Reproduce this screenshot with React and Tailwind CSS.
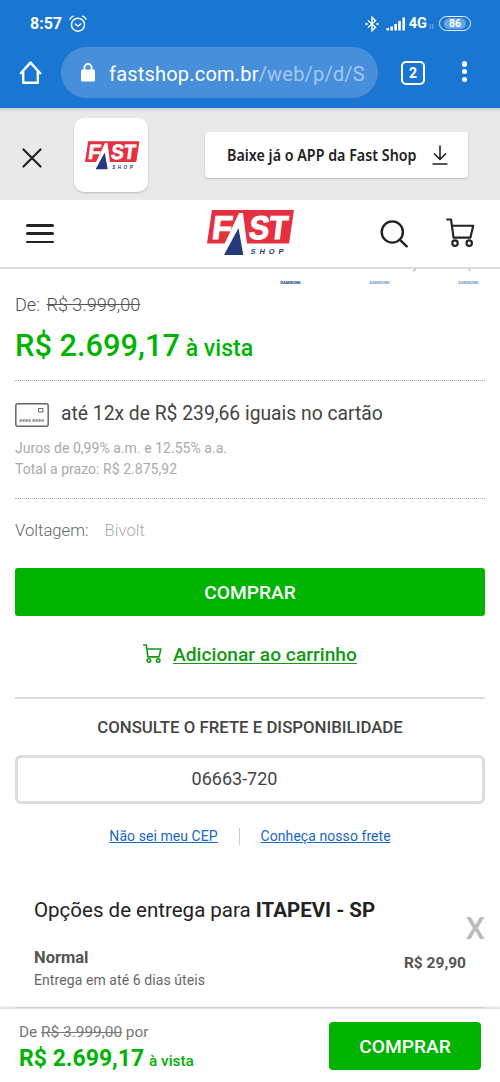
const thumbs = [
  { id: 1, className: 'text-[#1b4f9c]' },
  { id: 2, className: 'text-[#7f9fd6]' },
  { id: 3, className: 'text-[#7f9fd6]' },
];

// Red flag with the blue "A" spike, shared by the app banner and the site header.
function FastLogo({ className }) {
  return (
    <svg viewBox="0 0 88 46" className={className} role="img" aria-label="Fast Shop">
      <path d="M5 0H87L82 33.5H0Z" fill="#e5303f" />
      <path d="M32 3H36L41.5 45.5H12Z" fill="#fff" />
      <path d="M31.5 18L36.3 45H17Z" fill="#243a7c" />
      <g fontFamily="Liberation Sans" fontWeight="700" fill="#fff" stroke="#fff" strokeWidth="1.1" transform="translate(0 28.5) skewX(-7)">
        <text x="4" y="0" fontSize="33" textLength="20" lengthAdjust="spacingAndGlyphs">F</text>
        <text x="41" y="0" fontSize="33" textLength="38.5" lengthAdjust="spacingAndGlyphs">ST</text>
      </g>
      <text x="43.5" y="44" fontFamily="Liberation Sans" fontWeight="700" fontStyle="italic" fontSize="7.5" textLength="33" fill="#243a7c">SHOP</text>
    </svg>
  );
}

function CartIcon({ className, strokeWidth }) {
  return (
    <svg viewBox="0 0 30 30" className={className} fill="none" stroke="currentColor" strokeWidth={strokeWidth} strokeLinecap="round" strokeLinejoin="round">
      <path d="M1.2 1.5H5.2L7.8 20.3H25.2L28.2 8H6.2" />
      <circle cx="9.3" cy="26" r="2.8" />
      <circle cx="24" cy="26" r="2.8" />
    </svg>
  );
}

function StatusBar() {
  return (
    <div className="flex h-[46px] items-center pl-[30px] pr-[29px] pt-px">
      <span className="text-[16px] font-bold leading-4">8:57</span>
      <svg viewBox="0 0 18 18" className="ml-[7px] size-[18px]" fill="none" stroke="currentColor" strokeWidth="1.4" strokeLinecap="round">
        <circle cx="9" cy="9.7" r="6.5" />
        <path d="M1 4.2Q2 2 4.4 1.2M17 4.2Q16 2 13.6 1.2M6.3 9L9 11.2L11.8 9" />
      </svg>
      <svg viewBox="0 0 14 16" className="ml-auto h-4 w-[14px]" fill="none" stroke="currentColor" strokeWidth="1.4">
        <path d="M3 4.5L10.5 11.2L7 14.8V1.2L10.5 4.8L3 11.5" />
        <path d="M0.5 8H2.5M11.5 8H13.5" strokeWidth="1.8" />
      </svg>
      <svg viewBox="0 0 20 14" className="ml-[7px] h-[14px] w-5" fill="currentColor">
        <path d="M0.5 11h2.6v2.5H0.5zM4.4 9.5h2.6v4H4.4zM8.3 7h2.6v6.5H8.3zM12.2 4h2.6v9.5h-2.6zM16.4 0.5h2.6v13h-2.6z" />
      </svg>
      <span className="ml-[3px] text-[14.5px] font-bold leading-4">4G</span>
      <svg viewBox="0 0 6 6" className="ml-[2px] mt-[5px] size-[5px] opacity-50" stroke="currentColor" strokeWidth="1">
        <path d="M1.5 0V6M4.5 0V6" />
      </svg>
      <div className="ml-[5px] flex h-[15px] w-8 items-center justify-center rounded-full border-[1.5px] border-white/90 p-[1px]">
        <span className="flex h-full w-[22px] items-center justify-center rounded-full bg-white/35 pt-px text-[10.5px] font-bold leading-none">86</span>
      </div>
    </div>
  );
}

function AddressBar() {
  return (
    <div className="flex h-[62px] items-start pt-[1px]">
      <svg viewBox="0 0 24 24" className="ml-[19px] mt-[14px] size-6" fill="none" stroke="currentColor" strokeWidth="2.4" strokeLinejoin="round" strokeLinecap="round">
        <path d="M1.8 12.2L11.5 1.6L21.2 12.2M4.2 10.5V21.8H18.8V10.5" />
      </svg>
      <div className="ml-[18px] flex h-[51px] w-[317px] items-center rounded-full bg-[#488fdb] pl-5">
        <svg viewBox="0 0 14 19" className="h-[19px] w-[14px]" aria-hidden="true">
          <rect y="6.5" width="14" height="12" rx="1.5" fill="currentColor" />
          <path d="M3.4 7V4.6a3.6 3.6 0 0 1 7.2 0V7" fill="none" stroke="currentColor" strokeWidth="1.8" />
        </svg>
        <span className="ml-[14px] pt-[2px] text-[20px] tracking-[0.2px] whitespace-nowrap">
          fastshop.com.br<span className="text-[#a3c9f1]">/web/p/d/S</span>
        </span>
      </div>
      <div className="ml-[23px] mt-[14px] flex h-6 w-[24px] items-center justify-center rounded-[5px] border-[2.5px] border-white text-[14px] font-bold">2</div>
      <div className="ml-[36.5px] mt-[14px] flex flex-col gap-[2.2px]">
        <i className="size-[5.6px] rounded-full bg-white" />
        <i className="size-[5.6px] rounded-full bg-white" />
        <i className="size-[5.6px] rounded-full bg-white" />
      </div>
    </div>
  );
}

function AppBanner() {
  return (
    <div className="flex h-[92px] items-start bg-[#e9e9e9] bg-linear-to-b from-[#cdd1d9] to-[#e9e9e9] to-[5px]">
      <svg viewBox="0 0 20 20" className="ml-[22px] mt-10 size-5" fill="none" stroke="#222" strokeWidth="2.2" strokeLinecap="round">
        <path d="M1.5 1.5L18.5 18.5M18.5 1.5L1.5 18.5" />
      </svg>
      <div className="ml-8 mt-[10px] flex h-[74px] w-[74px] items-center justify-center rounded-[10px] bg-white pl-[2px] shadow-[0_1px_2px_#bbb]">
        <FastLogo className="h-[29px] w-[55px]" />
      </div>
      <button className="ml-[57px] mt-6 flex h-[46px] w-[263px] items-center rounded-[3px] bg-white pl-[22px] text-[#222] shadow-[0_1px_2px_#bbb]">
        <span className="w-[190px] whitespace-nowrap text-left">
          <span className="inline-block origin-left scale-x-[0.893] font-['Noto_Sans'] text-[16px] font-semibold">Baixe já o APP da Fast Shop</span>
        </span>
        <svg viewBox="0 0 16 20" className="ml-[15px] h-5 w-4 shrink-0" fill="none" stroke="#222" strokeWidth="1.6">
          <path d="M8 0.5V14M2 8.5L8 14.3L14 8.5M0.5 19H15.5" />
        </svg>
      </button>
    </div>
  );
}

function SiteHeader() {
  return (
    <header className="flex h-[69px] items-start border-b-2 border-[#dcdcdc] bg-white text-[#222]">
      <div className="ml-[26px] mt-6 flex w-7 flex-col gap-[5.5px]">
        <i className="h-[2.8px] rounded-full bg-[#222]" />
        <i className="h-[2.8px] rounded-full bg-[#222]" />
        <i className="h-[2.8px] rounded-full bg-[#222]" />
      </div>
      <FastLogo className="ml-[153px] mt-[10px] h-[46px] w-[88px]" />
      <svg viewBox="0 0 28 28" className="ml-[85px] mt-5 size-7" fill="none" stroke="currentColor" strokeWidth="2.4" strokeLinecap="round">
        <circle cx="12.3" cy="12" r="10.6" />
        <path d="M20 19.8L26.7 26.3" />
      </svg>
      <CartIcon className="ml-[38px] mt-[18px] size-[29px]" strokeWidth={2.2} />
    </header>
  );
}

function App() {
  return (
    <div className="h-[1082px] w-[500px] overflow-hidden bg-white font-[Roboto,sans-serif] text-[#444]">
      <div className="h-[108px] bg-[#1976d2] text-white">
        <StatusBar />
        <AddressBar />
      </div>
      <AppBanner />
      <SiteHeader />

      <main className="px-[15px]">
        <div className="relative flex h-[22px] items-center justify-end gap-[66px] pt-[6px] pr-[5px]">
          <svg viewBox="0 0 60 3" className="absolute left-[397px] top-0 h-[3px] w-[60px]" fill="none" stroke="#999">
            <path d="M1 2L4 0M57 0L58.5 2" />
          </svg>
          {thumbs.map((thumb) => (
            <span key={thumb.id} className={`w-[23px] text-center text-[4.2px] font-black leading-none ${thumb.className}`}>SAMSUNG</span>
          ))}
        </div>

        <p className="h-[28px] text-[18.1px] font-light leading-[28px] text-[#555]">
          De: <s className="ml-[2px]">R$ 3.999,00</s>
        </p>
        <p className="h-[61px] whitespace-nowrap pt-[6px] text-[30.8px] font-medium leading-[42px] text-[#00b300]">
          R$ 2.699,17 <span className="-ml-[2px] text-[23.1px]">à vista</span>
        </p>

        <div className="h-[119px] border-y border-dotted border-[#aaa]">
          <div className="flex h-[67px] items-center">
            <svg viewBox="0 0 34 24" className="h-6 w-[34px]" fill="none" stroke="#666">
              <rect x="0.8" y="0.8" width="32.4" height="22.4" rx="2" strokeWidth="1.5" />
              <path d="M23.5 5.5h4.5v3.5h-4.5z" />
              <path d="M4.5 17.5h11.5M17.5 17.5h12" stroke="#888" strokeWidth="2.4" strokeDasharray="2.2 0.8" />
            </svg>
            <span className="ml-3 whitespace-nowrap text-[19.3px]">até 12x de R$ 239,66 iguais no cartão</span>
          </div>
          <div className="-mt-[10px] text-[14px] leading-[21px] tracking-[0.04px] text-[#aaa]">
            <p>Juros de 0,99% a.m. e 12.55% a.a.</p>
            <p>Total a prazo: R$ 2.875,92</p>
          </div>
        </div>

        <p className="h-[69px] pt-[17px] text-[16.7px] font-light leading-[30px] text-[#666]">
          Voltagem: <span className="ml-3 text-[#aaa]">Bivolt</span>
        </p>
        <button className="block h-[48px] w-full rounded-[3px] bg-[#00b300] pt-[2px] text-[19.2px] font-medium text-white">COMPRAR</button>
        <div className="flex h-[81px] items-center justify-center pb-[2px] text-[#119911]">
          <CartIcon className="mb-[4px] mr-[11px] size-[19px]" strokeWidth={2.5} />
          <a className="text-[19.2px] font-medium underline underline-offset-2">Adicionar ao carrinho</a>
        </div>

        <section className="h-[171px] border-t-2 border-[#dcdcdc] text-center">
          <h2 className="h-[56px] text-[16.8px] font-medium leading-[56px]">CONSULTE O FRETE E DISPONIBILIDADE</h2>
          <div className="h-[49px] rounded-[6px] border-[3px] border-[#dcdcdc] pr-[31px] text-[18px] leading-[42px]">06663-720</div>
          <div className="flex h-[64px] items-center justify-center text-[14px] tracking-[0.06px] text-[#1a66c4]">
            <a className="underline">Não sei meu CEP</a>
            <i className="ml-[21px] mr-[21px] h-[17px] w-px bg-[#ccc]" />
            <a className="underline">Conheça nosso frete</a>
          </div>
        </section>

        <section className="relative h-[140px] border-b border-[#bbb] px-[19px] pt-[25px]">
          <h3 className="h-[36px] whitespace-nowrap text-[20.5px] leading-[34px] text-[#222]">
            Opções de entrega para <b className="font-bold">ITAPEVI - SP</b>
          </h3>
          <button className="absolute right-0 top-[44px] text-[31px] font-medium leading-[34px] text-[#bbb]">X</button>
          <div className="flex justify-between pt-[16px]">
            <div>
              <p className="pt-px text-[16.5px] font-bold leading-[23px] text-[#555]">Normal</p>
              <p className="text-[14px] leading-[22px] tracking-[0.08px] text-[#666]">Entrega em até 6 dias úteis</p>
            </div>
            <p className="pt-[6px] text-[15.5px] font-bold leading-[24px] text-[#555]">R$ 29,90</p>
          </div>
        </section>
      </main>

      <footer className="relative flex h-[75px] justify-between border-t border-[#e2e2e2] bg-white pl-[19px] pr-[19px] shadow-[0_-1px_2px_#ddd]">
        <div className="pt-[13px]">
          <p className="text-[15.4px] font-normal leading-[20px] text-[#777]">
            De <s>R$ 3.999,00</s> por
          </p>
          <p className="whitespace-nowrap pt-[2px] text-[23px] font-bold leading-[30px] text-[#00b300]">
            R$ 2.699,17 <span className="-ml-px text-[15.4px] font-medium">à vista</span>
          </p>
        </div>
        <button className="mt-[13px] h-[48px] w-[152px] rounded-[4px] bg-[#00b300] pt-[3px] text-[19.2px] font-medium text-white">COMPRAR</button>
      </footer>
    </div>
  );
}

export default App;
